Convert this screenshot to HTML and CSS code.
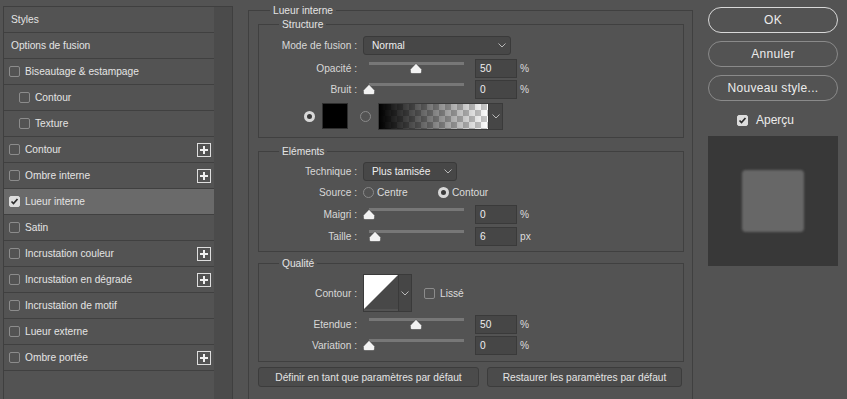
FILE: index.html
```html
<!DOCTYPE html>
<html lang="fr">
<head>
  <meta charset="UTF-8">
  <title>Style de calque</title>
  <link rel="stylesheet" href="styles.css">
</head>
<body>
  <div class="dialog">

    <!-- Style list -->
    <div class="style-list">
      <ul class="items">
        <li class="item plain">Styles</li>
        <li class="item plain">Options de fusion</li>
        <li class="item"><span class="cb"></span>Biseautage &amp; estampage</li>
        <li class="item sub"><span class="cb"></span>Contour</li>
        <li class="item sub"><span class="cb"></span>Texture</li>
        <li class="item"><span class="cb"></span>Contour<svg class="plus" width="14" height="14" viewBox="0 0 14 14"><rect x="0.5" y="0.5" width="13" height="13" fill="none" stroke="#dedede"/><path d="M7 3v8M3 7h8" stroke="#f0f0f0" stroke-width="2"/></svg></li>
        <li class="item"><span class="cb"></span>Ombre interne<svg class="plus" width="14" height="14" viewBox="0 0 14 14"><rect x="0.5" y="0.5" width="13" height="13" fill="none" stroke="#dedede"/><path d="M7 3v8M3 7h8" stroke="#f0f0f0" stroke-width="2"/></svg></li>
        <li class="item active"><span class="cb on"><svg width="9" height="9" viewBox="0 0 9 9"><path d="M1.5 4.5 L3.5 6.5 L7.5 2" fill="none" stroke="#2b2b2b" stroke-width="1.7"/></svg></span>Lueur interne</li>
        <li class="item"><span class="cb"></span>Satin</li>
        <li class="item"><span class="cb"></span>Incrustation couleur<svg class="plus" width="14" height="14" viewBox="0 0 14 14"><rect x="0.5" y="0.5" width="13" height="13" fill="none" stroke="#dedede"/><path d="M7 3v8M3 7h8" stroke="#f0f0f0" stroke-width="2"/></svg></li>
        <li class="item"><span class="cb"></span>Incrustation en dégradé<svg class="plus" width="14" height="14" viewBox="0 0 14 14"><rect x="0.5" y="0.5" width="13" height="13" fill="none" stroke="#dedede"/><path d="M7 3v8M3 7h8" stroke="#f0f0f0" stroke-width="2"/></svg></li>
        <li class="item"><span class="cb"></span>Incrustation de motif</li>
        <li class="item"><span class="cb"></span>Lueur externe</li>
        <li class="item"><span class="cb"></span>Ombre portée<svg class="plus" width="14" height="14" viewBox="0 0 14 14"><rect x="0.5" y="0.5" width="13" height="13" fill="none" stroke="#dedede"/><path d="M7 3v8M3 7h8" stroke="#f0f0f0" stroke-width="2"/></svg></li>
      </ul>
      <div class="scroll-track"></div>
    </div>

    <!-- Settings -->
    <div class="settings">
      <div class="legend outer">Lueur interne</div>

      <div class="group structure">
        <div class="legend">Structure</div>
        <div class="row mt5">
          <span class="lbl">Mode de fusion :</span>
          <div class="select mode">Normal<svg width="8" height="5" viewBox="0 0 8 5"><path d="M0.5 0.5 L4 4 L7.5 0.5" fill="none" stroke="#b8b8b8"/></svg></div>
        </div>
        <div class="row mt4">
          <span class="lbl">Opacité :</span>
          <div class="slider"><span class="track"></span><svg class="thumb" style="left:47px" width="12" height="11" viewBox="0 0 12 11"><path d="M6 0.4 L11.6 6.3 V9 Q11.6 10.6 10 10.6 H2 Q0.4 10.6 0.4 9 V6.3 Z" fill="#f2f2f2" stroke="#333" stroke-width="0.5"/></svg></div>
          <span class="num">50</span><span class="unit">%</span>
        </div>
        <div class="row mt2">
          <span class="lbl">Bruit :</span>
          <div class="slider"><span class="track"></span><svg class="thumb" style="left:0px" width="12" height="11" viewBox="0 0 12 11"><path d="M6 0.4 L11.6 6.3 V9 Q11.6 10.6 10 10.6 H2 Q0.4 10.6 0.4 9 V6.3 Z" fill="#f2f2f2" stroke="#333" stroke-width="0.5"/></svg></div>
          <span class="num">0</span><span class="unit">%</span>
        </div>
        <div class="color-row">
          <span class="radio on"></span>
          <span class="swatch"></span>
          <span class="radio"></span>
          <div class="grad-pick">
            <span class="grad"></span>
            <span class="drop"><svg width="8" height="5" viewBox="0 0 8 5"><path d="M0.5 0.5 L4 4 L7.5 0.5" fill="none" stroke="#b8b8b8"/></svg></span>
          </div>
        </div>
      </div>

      <div class="group elements">
        <div class="legend">Eléments</div>
        <div class="row mt4">
          <span class="lbl">Technique :</span>
          <div class="select technique">Plus tamisée<svg width="8" height="5" viewBox="0 0 8 5"><path d="M0.5 0.5 L4 4 L7.5 0.5" fill="none" stroke="#b8b8b8"/></svg></div>
        </div>
        <div class="row mt2">
          <span class="lbl">Source :</span>
          <span class="opt first"><span class="radio"></span>Centre</span>
          <span class="opt"><span class="radio on"></span>Contour</span>
        </div>
        <div class="row mt3">
          <span class="lbl">Maigri :</span>
          <div class="slider"><span class="track"></span><svg class="thumb" style="left:0px" width="12" height="11" viewBox="0 0 12 11"><path d="M6 0.4 L11.6 6.3 V9 Q11.6 10.6 10 10.6 H2 Q0.4 10.6 0.4 9 V6.3 Z" fill="#f2f2f2" stroke="#333" stroke-width="0.5"/></svg></div>
          <span class="num">0</span><span class="unit">%</span>
        </div>
        <div class="row mt3">
          <span class="lbl">Taille :</span>
          <div class="slider"><span class="track"></span><svg class="thumb" style="left:6px" width="12" height="11" viewBox="0 0 12 11"><path d="M6 0.4 L11.6 6.3 V9 Q11.6 10.6 10 10.6 H2 Q0.4 10.6 0.4 9 V6.3 Z" fill="#f2f2f2" stroke="#333" stroke-width="0.5"/></svg></div>
          <span class="num">6</span><span class="unit">px</span>
        </div>
      </div>

      <div class="group quality">
        <div class="legend">Qualité</div>
        <div class="row tall mt5">
          <span class="lbl">Contour :</span>
          <div class="contour-pick">
            <svg width="34" height="34" viewBox="0 0 34 34"><rect width="34" height="34" fill="#484848"/><polygon points="0,0 34,0 0,34" fill="#ffffff"/></svg>
            <span class="drop"><svg width="8" height="5" viewBox="0 0 8 5"><path d="M0.5 0.5 L4 4 L7.5 0.5" fill="none" stroke="#b8b8b8"/></svg></span>
          </div>
          <span class="cb lisse"></span>Lissé
        </div>
        <div class="row mt4">
          <span class="lbl">Etendue :</span>
          <div class="slider"><span class="track"></span><svg class="thumb" style="left:47px" width="12" height="11" viewBox="0 0 12 11"><path d="M6 0.4 L11.6 6.3 V9 Q11.6 10.6 10 10.6 H2 Q0.4 10.6 0.4 9 V6.3 Z" fill="#f2f2f2" stroke="#333" stroke-width="0.5"/></svg></div>
          <span class="num">50</span><span class="unit">%</span>
        </div>
        <div class="row mt2">
          <span class="lbl">Variation :</span>
          <div class="slider"><span class="track"></span><svg class="thumb" style="left:0px" width="12" height="11" viewBox="0 0 12 11"><path d="M6 0.4 L11.6 6.3 V9 Q11.6 10.6 10 10.6 H2 Q0.4 10.6 0.4 9 V6.3 Z" fill="#f2f2f2" stroke="#333" stroke-width="0.5"/></svg></div>
          <span class="num">0</span><span class="unit">%</span>
        </div>
      </div>

      <div class="defaults">
        <button class="btn wide">Définir en tant que paramètres par défaut</button>
        <button class="btn">Restaurer les paramètres par défaut</button>
      </div>
    </div>

    <!-- Actions -->
    <div class="actions">
      <button class="pill default">OK</button>
      <button class="pill">Annuler</button>
      <button class="pill">Nouveau style...</button>
      <div class="preview-check"><span class="cb on"><svg width="9" height="9" viewBox="0 0 9 9"><path d="M1.5 4.5 L3.5 6.5 L7.5 2" fill="none" stroke="#2b2b2b" stroke-width="1.7"/></svg></span>Aperçu</div>
      <div class="preview"><div class="preview-swatch"></div></div>
    </div>

  </div>
</body>
</html>
```

FILE: styles.css
```css
body {
  margin: 0;
  background: #535353;
  font-family: "Liberation Sans", Arial, sans-serif;
  font-size: 10.2px;
  color: #dcdcdc;
}
.dialog {
  display: flex;
  align-items: flex-start;
  width: 847px;
  height: 399px;
  overflow: hidden;
}

/* left list */
.style-list {
  display: flex;
  margin: 6px 0 0 3px;
  height: 420px;
  border: 1px solid #3f3f3f;
}
.items {
  list-style: none;
  margin: 0;
  padding: 0;
  width: 210px;
}
.item {
  display: flex;
  align-items: center;
  height: 25px;
  padding-left: 5px;
  border-bottom: 1px solid #404040;
  color: #e4e4e4;
}
.item.plain {
  padding-left: 7px;
}
.item.sub {
  padding-left: 15px;
}
.item.active {
  background: #6a6a6a;
}
.item .cb {
  margin-right: 5px;
}
.plus {
  margin-left: auto;
  margin-right: 3px;
}
.scroll-track {
  width: 18px;
  background: #4b4b4b;
}

.cb {
  flex: none;
  width: 11px;
  height: 11px;
  box-sizing: border-box;
  border: 1px solid #8c8c8c;
  border-radius: 2px;
}
.cb.on {
  display: flex;
  align-items: center;
  justify-content: center;
  background: #dcdcdc;
  border-color: #dcdcdc;
}

/* settings */
.settings {
  margin: 10px 0 0 15px;
  width: 445px;
  height: 420px;
  box-sizing: border-box;
  border: 1px solid #404040;
  padding: 0 8px 0 9px;
}
.legend {
  width: fit-content;
  height: 13px;
  line-height: 13px;
  margin: -7px 0 0 20px;
  padding: 0 3px;
  background: #535353;
  color: #e4e4e4;
}
.legend.outer {
  margin-left: 12px;
}
.group {
  border: 1px solid #404040;
}
.structure {
  margin-top: 7px;
  padding-bottom: 8px;
}
.elements {
  margin-top: 13px;
  padding-bottom: 5px;
}
.quality {
  margin-top: 11px;
  padding-bottom: 6px;
}
.row {
  display: flex;
  align-items: center;
  height: 19px;
}
.row.tall {
  height: 36px;
}
.mt2 { margin-top: 2px; }
.mt3 { margin-top: 3px; }
.mt4 { margin-top: 4px; }
.mt5 { margin-top: 5px; }
.lbl {
  width: 98px;
  margin-right: 6px;
  text-align: right;
  color: #d8d8d8;
}
.select {
  display: flex;
  align-items: center;
  justify-content: space-between;
  height: 19px;
  box-sizing: border-box;
  padding: 0 4px 0 8px;
  border: 1px solid #3a3a3a;
  border-radius: 3px;
  background: #474747;
  color: #eeeeee;
}
.select.mode {
  width: 148px;
}
.select.technique {
  width: 94px;
}
.slider {
  position: relative;
  width: 112px;
  height: 19px;
}
.track {
  position: absolute;
  left: 6px;
  top: 3px;
  width: 95px;
  height: 3px;
  background: #777777;
}
.thumb {
  position: absolute;
  top: 4px;
}
.num {
  display: flex;
  align-items: center;
  width: 42px;
  height: 19px;
  box-sizing: border-box;
  padding-left: 4px;
  border: 1px solid #3a3a3a;
  background: #464646;
  color: #eeeeee;
}
.unit {
  margin-left: 3px;
}

.radio {
  flex: none;
  width: 11px;
  height: 11px;
  box-sizing: border-box;
  border: 1px solid #8a8a8a;
  border-radius: 50%;
}
.radio.on {
  border: 3px solid #d8d8d8;
  background: #3a3a3a;
}
.color-row {
  display: flex;
  align-items: center;
  height: 26px;
  margin-top: 4px;
  padding-left: 45px;
}
.swatch {
  width: 26px;
  height: 26px;
  box-sizing: border-box;
  margin: 0 12px 0 7px;
  border: 1px solid #2e2e2e;
  background: #000000;
}
.grad-pick {
  display: flex;
  height: 25px;
  margin-left: 7px;
  border: 1px solid #3a3a3a;
}
.grad {
  width: 109px;
  background:
    linear-gradient(to right, #000000, rgba(0, 0, 0, 0)),
    repeating-conic-gradient(#c9c9c9 0 25%, #ffffff 0 50%) 0 0 / 12px 12px;
}
.drop {
  display: flex;
  align-items: center;
  justify-content: center;
  width: 13px;
  background: #464646;
  border-left: 1px solid #3a3a3a;
}
.opt {
  display: flex;
  align-items: center;
  gap: 3px;
}
.opt.first {
  width: 75px;
}
.contour-pick {
  display: flex;
  height: 36px;
  border: 1px solid #3a3a3a;
}
.contour-pick .drop {
  width: 12px;
}
.cb.lisse {
  margin: 0 5px 0 12px;
}
.defaults {
  display: flex;
  gap: 8px;
  margin-top: 5px;
}
.btn {
  height: 20px;
  width: 195px;
  padding: 0;
  border: 1px solid #3c3c3c;
  border-radius: 3px;
  background: #4b4b4b;
  color: #e4e4e4;
  font: inherit;
}
.btn.wide {
  width: 221px;
}

/* right column */
.actions {
  display: flex;
  flex-direction: column;
  width: 130px;
  margin: 7px 0 0 15px;
}
.pill {
  height: 26px;
  margin-bottom: 8px;
  padding: 0;
  border: 1px solid #8a8a8a;
  border-radius: 13px;
  background: transparent;
  color: #ececec;
  font-family: "Liberation Sans", Arial, sans-serif;
  font-size: 12px;
  letter-spacing: 0.3px;
}
.pill.default {
  border-color: #d8d8d8;
}
.preview-check {
  display: flex;
  align-items: center;
  gap: 8px;
  height: 14px;
  margin-top: 4px;
  padding-left: 29px;
  font-size: 12px;
  color: #ececec;
}
.preview {
  display: flex;
  align-items: center;
  justify-content: center;
  height: 130px;
  margin-top: 9px;
  background: #383838;
}
.preview-swatch {
  width: 62px;
  height: 62px;
  border-radius: 4px;
  background: #676767;
  filter: blur(0.8px);
}
```
